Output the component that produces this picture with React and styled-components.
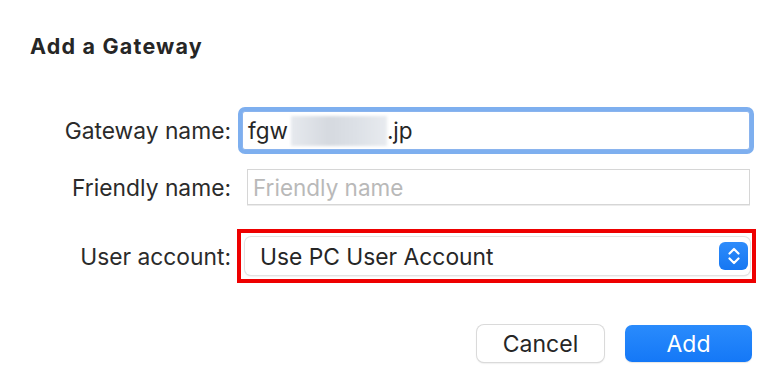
import styled, { createGlobalStyle } from "styled-components";

const GlobalStyle = createGlobalStyle`
  body {
    margin: 0;
    background: #ffffff;
    font-family: Inter, "Noto Sans", "Liberation Sans", sans-serif;
    color: #262626;
  }
`;

const Dialog = styled.div`
  width: 779px;
  height: 381px;
  box-sizing: border-box;
  padding: 33px 23px 0 30px;
  background: #ffffff;
`;

const Title = styled.h1`
  margin: 0;
  font-size: 21.5px;
  letter-spacing: 1.2px;
  line-height: 26px;
  font-weight: 700;
  color: #262626;
`;

const Form = styled.div`
  display: flex;
  flex-direction: column;
  margin-top: 52px;
`;

const Row = styled.div`
  display: flex;
  align-items: center;
  margin-top: ${(p) => p.$gap || 0}px;
`;

const Label = styled.label`
  width: 201px;
  flex: none;
  text-align: right;
  font-size: 22.8px;
  color: #2b2b2b;
  margin-right: ${(p) => p.$space}px;
`;

const Field = styled.div`
  flex: 1;
  box-sizing: border-box;
  height: ${(p) => p.$h}px;
  display: flex;
  align-items: center;
  font-size: 22.5px;
  background: #fff;
  border: 1px solid ${(p) => (p.$focus ? "#8ab4ee" : "#d6d6d6")};
  border-radius: ${(p) => (p.$focus ? 3 : 0)}px;
  box-shadow: ${(p) => (p.$focus ? "0 0 0 4px #7eafef" : "0 1px 0 #ececec")};
  padding-left: 5px;
  margin-right: 6px;
`;

const Placeholder = styled.span`
  color: #b9b9b9;
  font-size: 22.5px;
`;

const Redacted = styled.span`
  display: inline-block;
  width: 96px;
  height: 30px;
  margin-left: 3px;
  background: linear-gradient(90deg, #e6e9ee, #d5d9df 40%, #dde1e7 70%, #e8ebef);
  filter: blur(1.5px);
`;

const Highlight = styled.div`
  flex: 1;
  border: 4px solid #ee0000;
  padding: 4px 2px 4px 4px;
`;

const Select = styled.div`
  height: 38px;
  box-sizing: border-box;
  display: flex;
  align-items: center;
  justify-content: space-between;
  padding: 0 2px 0 15px;
  background: #fff;
  border-radius: 6px;
  box-shadow: 0 0 0 1px #e2e2e2, 0 1px 2px rgba(0, 0, 0, 0.18);
  font-size: 22.8px;
  color: #262626;
`;

const Stepper = styled.div`
  width: 29px;
  height: 28px;
  border-radius: 6px;
  background: linear-gradient(#2e8cfb, #1677f2);
  display: flex;
  align-items: center;
  justify-content: center;
`;

const Actions = styled.div`
  display: flex;
  justify-content: flex-end;
  gap: 21px;
  margin-top: 42px;
  padding-right: 4px;
`;

const Button = styled.button`
  width: 127px;
  height: 37px;
  border-radius: 7px;
  font-family: inherit;
  font-size: 23px;
  cursor: pointer;
  border: none;
  background: ${(p) => (p.$primary ? "linear-gradient(#2a8bfc, #1478f7)" : "#fff")};
  color: ${(p) => (p.$primary ? "#fff" : "#262626")};
  box-shadow: ${(p) =>
    p.$primary
      ? "0 1px 1px rgba(0,0,0,0.1)"
      : "0 0 0 1px #dadada, 0 1px 2px rgba(0,0,0,0.2)"};
`;

export default function App() {
  return (
    <>
      <GlobalStyle />
      <Dialog>
        <Title>Add a Gateway</Title>
        <Form>
          <Row>
            <Label $space={11}>Gateway name:</Label>
            <Field $focus $h={39}>
              fgw<Redacted />.jp
            </Field>
          </Row>
          <Row $gap={19}>
            <Label $space={16}>Friendly name:</Label>
            <Field $h={36}>
              <Placeholder>Friendly name</Placeholder>
            </Field>
          </Row>
          <Row $gap={24}>
            <Label $space={6}>User account:</Label>
            <Highlight>
              <Select>
                Use PC User Account
                <Stepper>
                  <svg width="16" height="22" viewBox="0 0 16 22" fill="none">
                    <path
                      d="M3.5 8.5 L8 4 L12.5 8.5 M3.5 13.5 L8 18 L12.5 13.5"
                      stroke="#fff"
                      strokeWidth="2.2"
                      strokeLinecap="round"
                      strokeLinejoin="round"
                    />
                  </svg>
                </Stepper>
              </Select>
            </Highlight>
          </Row>
        </Form>
        <Actions>
          <Button>Cancel</Button>
          <Button $primary>Add</Button>
        </Actions>
      </Dialog>
    </>
  );
}
